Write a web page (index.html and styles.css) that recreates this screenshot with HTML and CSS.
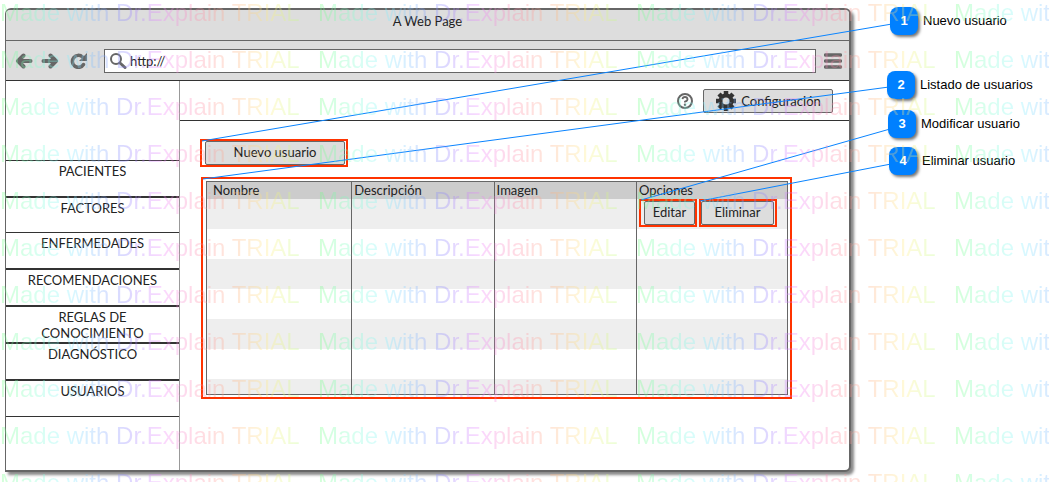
FILE: index.html
```html
<!DOCTYPE html>
<html lang="es">
<head>
<meta charset="utf-8">
<title>A Web Page</title>
<link rel="stylesheet" href="styles.css">
</head>
<body>
<div class="figure">
  <div class="window">
    <header class="titlebar">A Web Page</header>
    <div class="toolbar">
      <button class="tool" aria-label="Atrás"><svg width="18" height="16" viewBox="0 0 18 16"><path d="M8.500 2.500L3 8l5.500 5.500M3 8h12.500" fill="none" stroke="#666" stroke-width="4" stroke-linecap="round" stroke-linejoin="round"/></svg></button>
      <button class="tool" aria-label="Adelante"><svg width="18" height="16" viewBox="0 0 18 16"><path d="M9.500 2.500L15 8l-5.500 5.500M15 8H2.500" fill="none" stroke="#666" stroke-width="4" stroke-linecap="round" stroke-linejoin="round"/></svg></button>
      <button class="tool reload" aria-label="Recargar"><svg width="18" height="16" viewBox="0 0 18 16"><path d="M13.500 11.500A6 6 0 1 1 12.500 4" fill="none" stroke="#666" stroke-width="3.500" stroke-linecap="round"/><path d="M17 0v8H9z" fill="#666"/></svg></button>
      <label class="address">
        <svg width="18" height="16" viewBox="0 0 18 16" aria-hidden="true"><circle cx="7" cy="6" r="5" fill="none" stroke="#666" stroke-width="2"/><path d="M11 10l5 4.500" stroke="#666" stroke-width="3" stroke-linecap="round"/></svg>
        <input class="url" type="text" value="http://" aria-label="Dirección">
      </label>
      <button class="tool" aria-label="Menú"><svg width="18" height="16" viewBox="0 0 18 16"><path d="M1.500 2h15M1.500 8h15M1.500 14h15" stroke="#666" stroke-width="3.400" stroke-linecap="round"/></svg></button>
    </div>
    <div class="page">
      <nav class="sidebar">
        <div class="menu">
          <a class="item thin" href="#">PACIENTES</a>
          <a class="item" href="#">FACTORES</a>
          <a class="item thin" href="#">ENFERMEDADES</a>
          <a class="item" href="#">RECOMENDACIONES</a>
          <a class="item" href="#">REGLAS DE<br>CONOCIMIENTO</a>
          <a class="item" href="#">DIAGNÓSTICO</a>
          <a class="item" href="#">USUARIOS</a>
        </div>
      </nav>
      <main class="content">
        <div class="topbar">
          <button class="help" aria-label="Ayuda"><svg width="16" height="16" viewBox="0 0 16 16"><circle cx="8" cy="8" r="7" fill="none" stroke="#666" stroke-width="2"/><path d="M5.500 6.200Q5.700 4 8 4t2.500 2.200Q10.500 7.800 8 8.600v1" fill="none" stroke="#666" stroke-width="1.800"/><circle cx="8" cy="11.800" r="1.200" fill="#666"/></svg></button>
          <button class="btn config"><svg width="22" height="20" viewBox="0 0 22 20" aria-hidden="true"><g stroke="#333" stroke-width="4.500"><path d="M11 0v20M1 10h20M4 3l14 14M18 3L4 17"/></g><circle cx="11" cy="10" r="7.500" fill="#333"/><circle cx="11" cy="10" r="3.500" fill="#ddd"/></svg>Configuración</button>
        </div>
        <div class="body">
          <div class="mark new"><button class="btn">Nuevo usuario</button></div>
          <div class="mark list">
            <table class="users">
              <thead><tr><th class="first">Nombre</th><th>Descripción</th><th>Imagen</th><th class="last">Opciones</th></tr></thead>
              <tbody>
                <tr><td></td><td></td><td></td><td>
                  <div class="actions">
                    <div class="mark edit"><button class="btn">Editar</button></div>
                    <div class="mark remove"><button class="btn">Eliminar</button></div>
                  </div>
                </td></tr>
                <tr><td></td><td></td><td></td><td></td></tr>
                <tr><td></td><td></td><td></td><td></td></tr>
                <tr><td></td><td></td><td></td><td></td></tr>
                <tr><td></td><td></td><td></td><td></td></tr>
                <tr><td></td><td></td><td></td><td></td></tr>
                <tr class="cut"><td></td><td></td><td></td><td></td></tr>
              </tbody>
            </table>
          </div>
        </div>
      </main>
    </div>
  </div>

  <svg class="leaders" viewBox="0 0 1049 482" preserveAspectRatio="none" aria-hidden="true">
    <path d="M202 141L892 24M203 179L889 87M641 200L890 129M700 201L891 164" fill="none" stroke="#0a84ff" stroke-width="1"/>
  </svg>

  <div class="callout c1"><b class="num">1</b>Nuevo usuario</div>
  <div class="callout c2"><b class="num">2</b>Listado de usuarios</div>
  <div class="callout c3"><b class="num">3</b>Modificar usuario</div>
  <div class="callout c4"><b class="num">4</b>Eliminar usuario</div>

  <div class="watermark" aria-hidden="true">
    <span>Made with Dr.Explain TRIAL</span><span>Made with Dr.Explain TRIAL</span><span>Made with Dr.Explain TRIAL</span><span>Made with Dr.Explain TRIAL</span>
    <span>Made with Dr.Explain TRIAL</span><span>Made with Dr.Explain TRIAL</span><span>Made with Dr.Explain TRIAL</span><span>Made with Dr.Explain TRIAL</span>
    <span>Made with Dr.Explain TRIAL</span><span>Made with Dr.Explain TRIAL</span><span>Made with Dr.Explain TRIAL</span><span>Made with Dr.Explain TRIAL</span>
    <span>Made with Dr.Explain TRIAL</span><span>Made with Dr.Explain TRIAL</span><span>Made with Dr.Explain TRIAL</span><span>Made with Dr.Explain TRIAL</span>
    <span>Made with Dr.Explain TRIAL</span><span>Made with Dr.Explain TRIAL</span><span>Made with Dr.Explain TRIAL</span><span>Made with Dr.Explain TRIAL</span>
    <span>Made with Dr.Explain TRIAL</span><span>Made with Dr.Explain TRIAL</span><span>Made with Dr.Explain TRIAL</span><span>Made with Dr.Explain TRIAL</span>
    <span>Made with Dr.Explain TRIAL</span><span>Made with Dr.Explain TRIAL</span><span>Made with Dr.Explain TRIAL</span><span>Made with Dr.Explain TRIAL</span>
    <span>Made with Dr.Explain TRIAL</span><span>Made with Dr.Explain TRIAL</span><span>Made with Dr.Explain TRIAL</span><span>Made with Dr.Explain TRIAL</span>
    <span>Made with Dr.Explain TRIAL</span><span>Made with Dr.Explain TRIAL</span><span>Made with Dr.Explain TRIAL</span><span>Made with Dr.Explain TRIAL</span>
    <span>Made with Dr.Explain TRIAL</span><span>Made with Dr.Explain TRIAL</span><span>Made with Dr.Explain TRIAL</span><span>Made with Dr.Explain TRIAL</span>
    <span>Made with Dr.Explain TRIAL</span><span>Made with Dr.Explain TRIAL</span><span>Made with Dr.Explain TRIAL</span><span>Made with Dr.Explain TRIAL</span>
  </div>
</div>
</body>
</html>
```

FILE: styles.css
```css
* { box-sizing: border-box; }

body {
  margin: 0;
  background: #fff;
  color: #222;
  font: 13px/16px Lato, "Open Sans", sans-serif;
}

button, input { font: inherit; color: inherit; margin: 0; }

.figure {
  position: relative;
  min-height: 100vh;
  padding: 8px 198px 10px 5px;
  overflow: hidden;
  display: flex;
}

.window {
  flex: 1;
  display: flex;
  flex-direction: column;
  border: 2px solid #666;
  border-left-width: 1px;
  border-radius: 6px 6px 6px 0;
  box-shadow: 3px 3px 3px #888;
  background: #fff;
}

.titlebar {
  height: 31px;
  padding-top: 3px;
  border-bottom: 1px solid #666;
  border-radius: 4px 4px 0 0;
  background: #ddd;
  text-align: center;
}

.toolbar {
  height: 40px;
  padding: 0 7px 0 9px;
  display: flex;
  align-items: center;
  gap: 8px;
  border-bottom: 1px solid #333;
  background: #ddd;
}

.tool, .help {
  display: flex;
  padding: 0;
  border: 0;
  background: none;
}

.reload { margin: 0 8px 0 3px; }

.address {
  flex: 1;
  display: flex;
  align-items: center;
  gap: 3px;
  height: 24px;
  padding: 0 4px;
  border: 1px solid #666;
  background: #fff;
}

.url {
  flex: 1;
  min-width: 0;
  padding: 0;
  border: 0;
  outline: 0;
  background: none;
}

.page { flex: 1; display: flex; }

.sidebar {
  width: 174px;
  padding-top: 79px;
  border-right: 1px solid #999;
}

.menu {
  display: grid;
  grid-template-rows: repeat(3, 36px) repeat(4, 37px);
  border-bottom: 1px solid #333;
}

.item {
  padding-top: 2px;
  border-top: 2px solid #333;
  color: inherit;
  text-align: center;
  text-decoration: none;
}

.thin { border-top-width: 1px; }

.content { flex: 1; }

.topbar {
  height: 40px;
  padding-right: 16px;
  display: flex;
  align-items: center;
  justify-content: flex-end;
  gap: 10px;
  border-bottom: 1px solid #333;
}

.btn {
  display: flex;
  align-items: center;
  justify-content: center;
  width: 100%;
  height: 24px;
  padding: 0 0 2px;
  border: 1px solid #666;
  border-radius: 2px;
  background: #ddd;
}

.config { width: 130px; padding: 0; gap: 4px; }

.body { padding: 18px 57px 0 20px; }

.mark { border: 2px solid #f30; }

.new { width: 148px; padding: 0 1px 0 3px; }

.list { margin: 10px 0 0 1px; padding: 2px 2px 2px 3px; }

.users {
  width: 100%;
  table-layout: fixed;
  border-collapse: collapse;
  border: 1px solid #666;
}

.users th {
  height: 17px;
  padding: 0 2px;
  border-left: 1px solid #666;
  background: #ccc;
  font-weight: 400;
  text-align: left;
}

.users .first { width: 25%; padding-left: 6px; }
.users .last { width: 26%; }

.users td {
  height: 30px;
  padding: 0 2px;
  border-left: 1px solid #666;
  vertical-align: top;
}

.users tbody tr:nth-child(odd) { background: #eee; }
.users .cut td { height: 16px; }

.actions { display: flex; gap: 2px; }
.edit { width: 58px; padding-left: 3px; }
.remove { width: 78px; padding-right: 1px; }

.leaders {
  position: absolute;
  inset: 0;
  width: 100%;
  height: 100%;
  pointer-events: none;
}

.callout {
  position: absolute;
  display: flex;
  align-items: center;
  gap: 5px;
  color: #000;
  font-family: "Liberation Sans", Arial, sans-serif;
  white-space: nowrap;
}

.num {
  width: 28px;
  height: 28px;
  border-radius: 8px;
  background: #0080ff;
  box-shadow: 2px 2px 3px #777;
  color: #fff;
  line-height: 28px;
  text-align: center;
}

.c1 { top: 7px; left: calc(100% - 159px); }
.c2 { top: 71px; left: calc(100% - 162px); }
.c3 { top: 110px; left: calc(100% - 161px); }
.c4 { top: 147px; left: calc(100% - 160px); }

.watermark {
  position: absolute;
  top: 0;
  left: 0;
  display: grid;
  grid-template-columns: repeat(4, 318px);
  grid-auto-rows: 47px;
  font: 24px/26px "Liberation Sans", Arial, sans-serif;
  white-space: nowrap;
  pointer-events: none;
}

.watermark span {
  justify-self: start;
  align-self: start;
  background: linear-gradient(90deg, #70ff80, #80ffd0 12%, #80f4ff 22%, #80b8ff 32%, #8a80ff 42%, #f080ff 54%, #ff8aa8 66%, #ffb080 78%, #fff080 90%, #c0ff80);
  background-clip: text;
  -webkit-background-clip: text;
  color: transparent;
  opacity: 0.3;
}
```
